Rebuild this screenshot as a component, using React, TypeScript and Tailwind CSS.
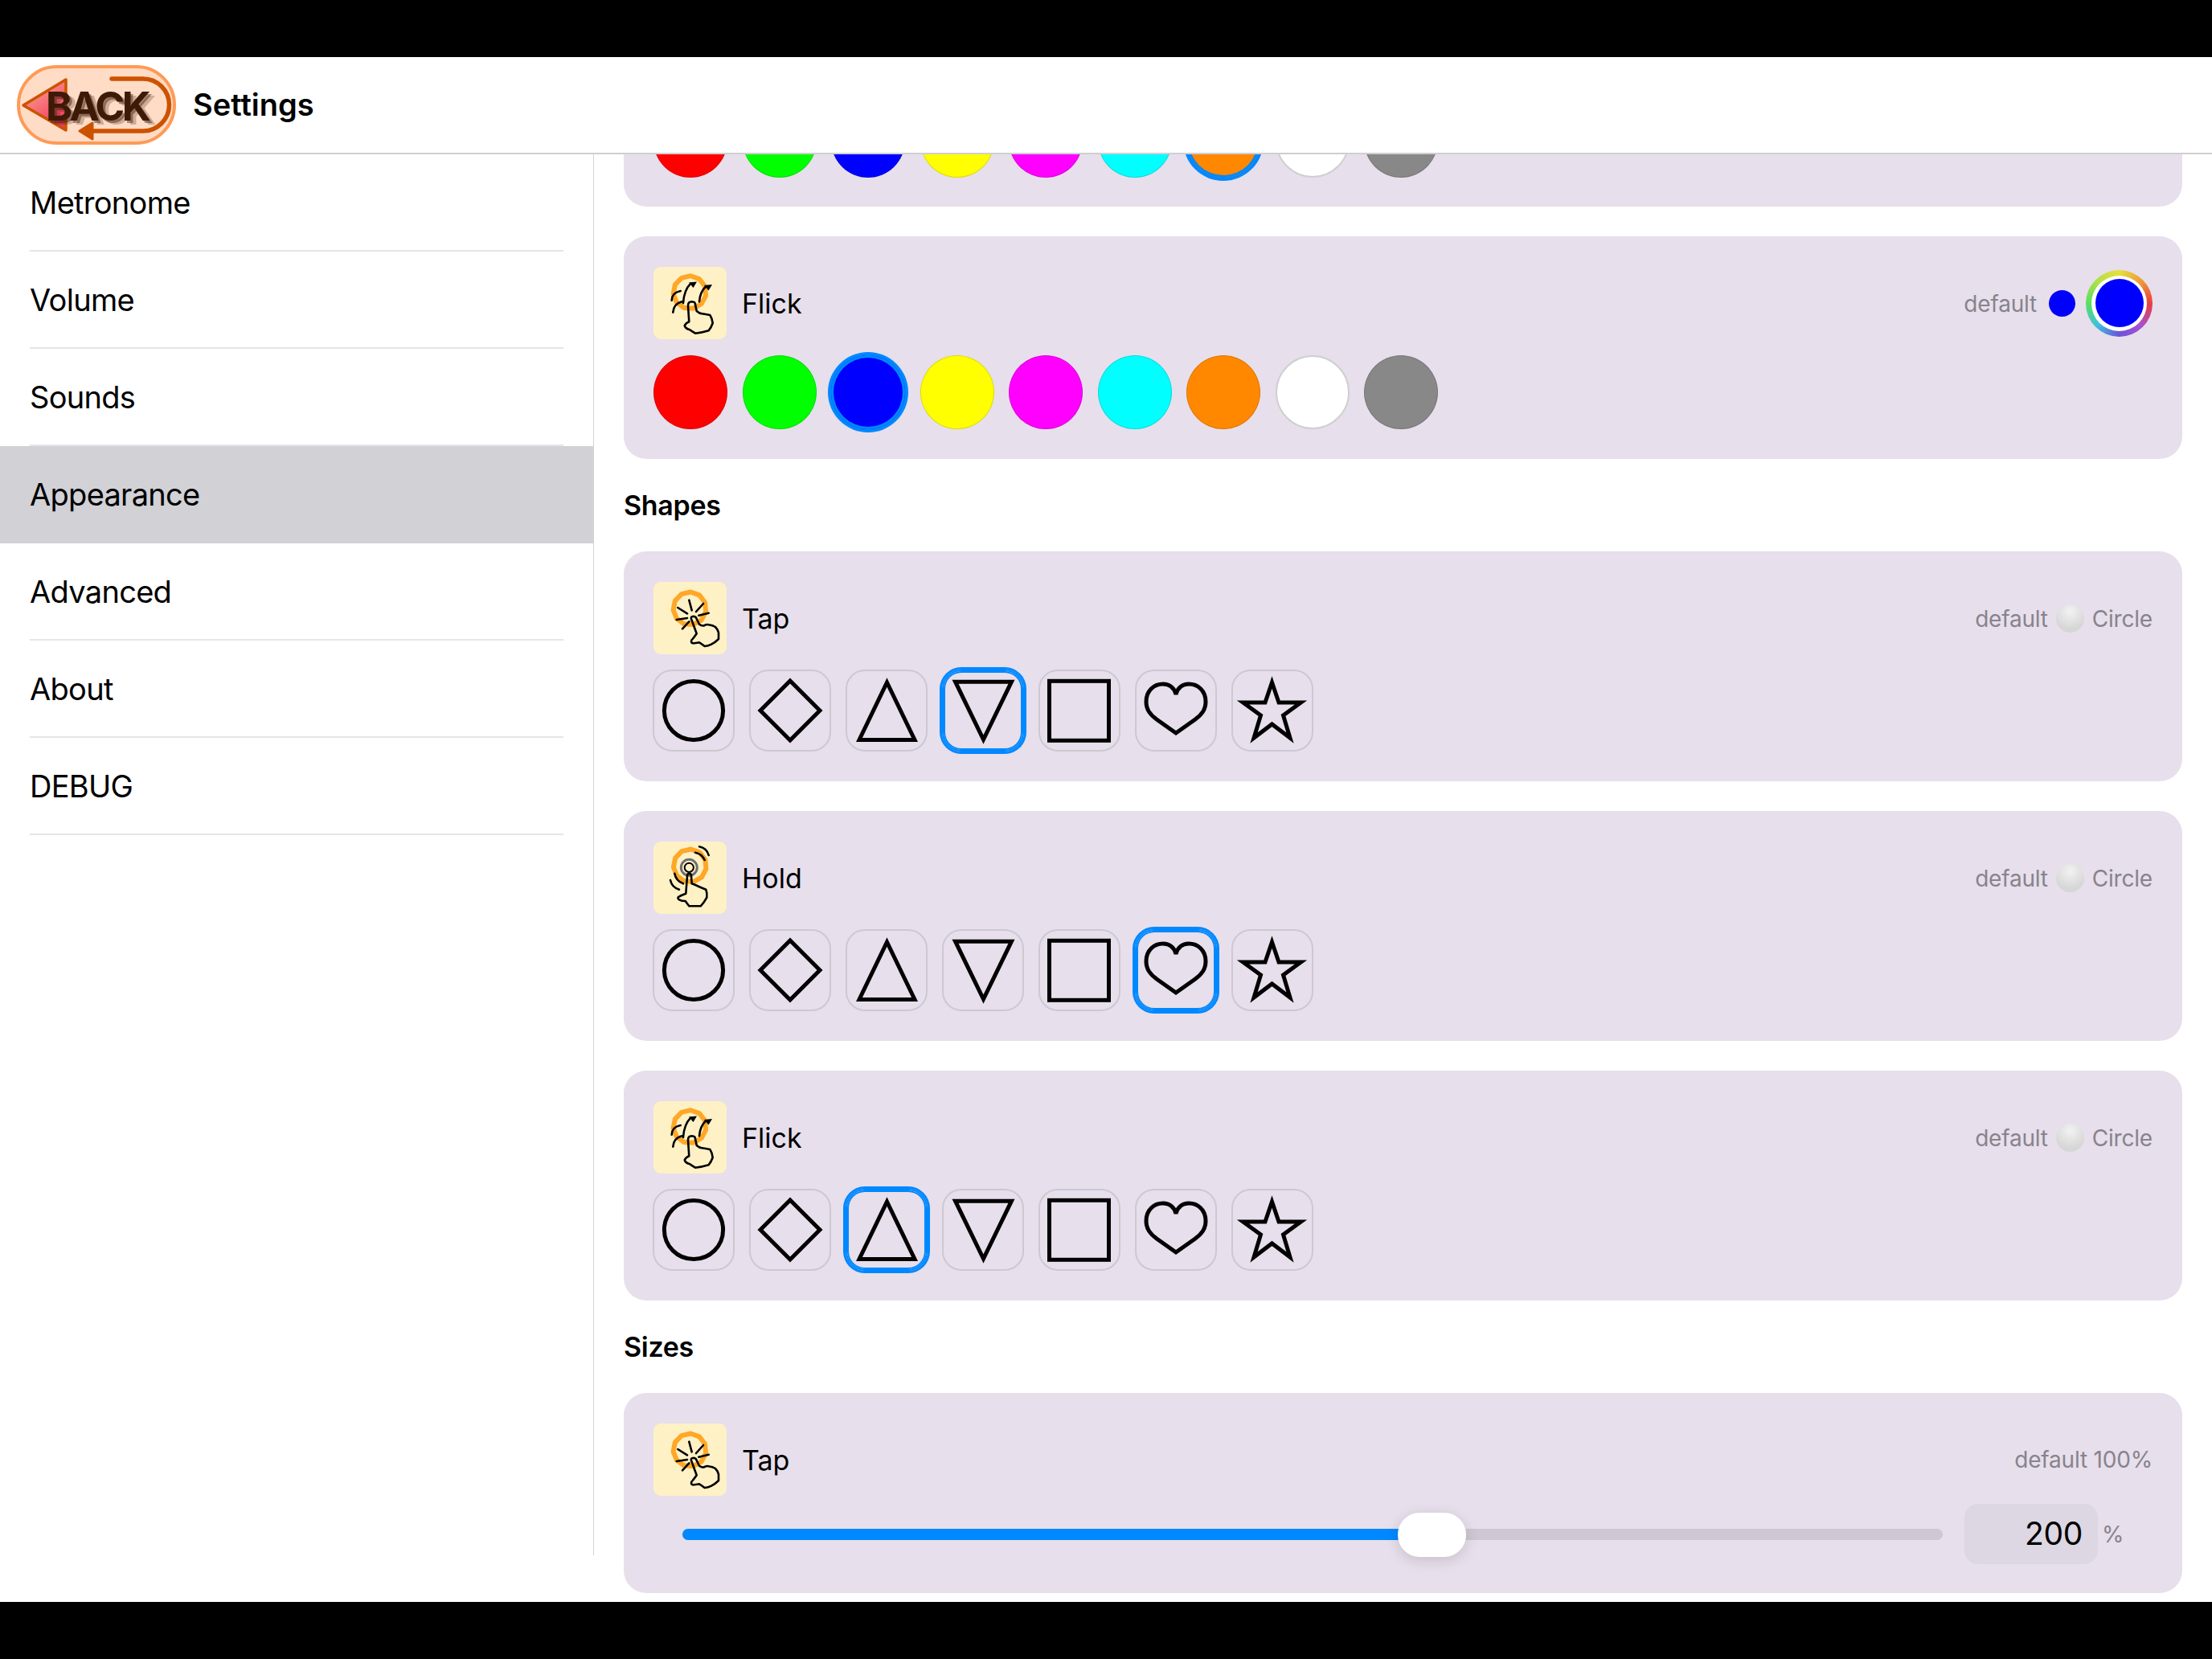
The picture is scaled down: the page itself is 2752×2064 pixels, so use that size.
import React from "react";

const FONT = "[font-family:Inter,'Liberation_Sans',sans-serif]";

function BackButton() {
  return (
    <div className="relative w-[198px] h-[99px] shrink-0 rounded-full bg-[#ffdcc6] border-[4px] border-[#ff9a55]">
      <svg className="absolute left-[-4px] top-[-4px]" width="198" height="99" viewBox="21 81 198 99" fill="none">
        <defs>
          <linearGradient id="tri" x1="0" y1="0" x2="0.6" y2="1">
            <stop offset="0" stopColor="#ffb39a" />
            <stop offset="1" stopColor="#ee3a5c" />
          </linearGradient>
        </defs>
        <path d="M29 131 L82 99 L82 162 Z" fill="url(#tri)" stroke="#cc5200" strokeWidth="3.5" strokeLinejoin="round" />
        <path d="M139 98 H178 A32.5 32.5 0 0 1 178 163 H112" stroke="#cc5200" strokeWidth="5.5" strokeLinecap="round" />
        <path d="M99 163 L115 153 L115 173 Z" fill="#cc5200" stroke="#cc5200" strokeWidth="3" strokeLinejoin="round" />
      </svg>
      <span className="absolute left-[32px] top-[17px] text-[50px] leading-[60px] font-bold tracking-[-3.5px] text-[#3d1a08] [text-shadow:3px_3px_0_rgba(61,26,8,0.45),7px_5px_0_rgba(61,26,8,0.25)]">
        BACK
      </span>
    </div>
  );
}

function Hand({ d }: { d: string }) {
  return <path d={d} fill="none" stroke="#000" strokeWidth="2.6" strokeLinejoin="round" strokeLinecap="round" />;
}

function Ring({ cx, cy }: { cx: number; cy: number }) {
  const pts = Array.from({ length: 11 }, (_, i) => {
    const a = (i / 11) * Math.PI * 2 + 0.2;
    return `${(cx + 20.5 * Math.cos(a)).toFixed(1)},${(cy + 20.5 * Math.sin(a)).toFixed(1)}`;
  }).join(" ");
  return <polygon points={pts} fill="none" stroke="#ffa726" strokeWidth="6" strokeLinejoin="round" />;
}

function GestureIcon({ kind }: { kind: "tap" | "hold" | "flick" }) {
  return (
    <div className="w-[91px] h-[90px] shrink-0 rounded-[9px] bg-[#fff1c6]">
      <svg width="91" height="90" viewBox="0 0 91 90" fill="none" stroke="#000" strokeWidth="2.6" strokeLinecap="round">
        {kind === "tap" && (
          <>
            <Ring cx={45} cy={33} />
            <path d="M44.3 22.7 L47.7 35.3 M62 27 L53 37 M30.3 32 L42 39.3 M68.7 38.7 L56.3 41.7 M28.7 47 L42 45 M44.3 49.3 L36 58.3" />
            <Hand d="M47 46 Q46 43 50 42.7 Q53 43 53.7 46 L57 52.7 Q60 55 63 54.3 Q66 52.5 68.7 53.3 Q74 54 77 56 Q80 59 81 63.3 L81 71 Q77 75 72 77.7 Q68 80 63.7 80 Q60 77 57 75.3 Q54 76 52 76 Q47 77 47 74.3 Q47 72 48.7 71 Q52 67 53.7 64.3 Z" />
          </>
        )}
        {kind === "hold" && (
          <>
            <Ring cx={45.3} cy={30} />
            <circle cx="44.3" cy="32.3" r="10" stroke="#6f6f6f" strokeWidth="3" />
            <circle cx="44.3" cy="32.3" r="5.6" strokeWidth="2" />
            <path d="M52 13.7 Q60 15 63.7 23 M57 6.3 Q66 8 68.7 17 M26.3 39.7 Q28 49 37 52.3 M21 48 Q23 57 32 59.7" />
            <Hand d="M42 43 Q42 39.7 44.5 39.7 Q47 39.7 47 43 L47.7 52.3 Q52 54 57 56.3 Q61 58 65.3 59.7 Q67 64 66.3 69.7 Q63 76 58.7 80.3 L44.3 80.3 Q41 76 39.7 74 Q35 74 32 72.3 Q29.5 70.5 31 69 Q35 66.5 40.3 64.7 Z" />
          </>
        )}
        {kind === "flick" && (
          <>
            <Ring cx={45} cy={31.7} />
            <path d="M37 45 Q38 29 46.3 20.7 M57 43.3 Q58 31 65.3 24.3 M22.7 41.7 Q23 32 33.7 30 M24.3 56.7 Q25 46 35.3 43.3" />
            <path d="M54 18.5 L44 19.5 L49.5 26 Z M73 22 L63 23 L68.5 29.5 Z" fill="#000" stroke="none" />
            <Hand d="M43 48.3 Q43 43.3 47.7 43.3 Q52 43.5 52 46.7 L53.7 55 Q57 58 60.3 58.3 Q65 59 70.3 60 Q73 64 73.7 70 Q72 75 68.7 79.3 Q60 82 52 82.7 Q48 80 45.3 78.3 Q40 77 38.7 73.3 Q40 70 44.3 68.3 Z" />
          </>
        )}
      </svg>
    </div>
  );
}

function Swatch({ color, selected, light }: { color: string; selected?: boolean; light?: boolean }) {
  return (
    <div
      className={
        "w-[92px] h-[92px] shrink-0 rounded-full " +
        (selected
          ? "shadow-[0_0_0_4px_#0088ff,inset_0_0_0_3px_#0088ff]"
          : light
            ? "border-[2px] border-[#cfcfd2]"
            : "border border-[#00000022]")
      }
      style={{ backgroundColor: color }}
    />
  );
}

const COLORS = ["#ff0000", "#00ff00", "#0000ff", "#ffff00", "#ff00ff", "#00ffff", "#ff8800", "#ffffff", "#888888"];

function SwatchRow({ selected }: { selected: number }) {
  return (
    <div className="flex gap-[18.5px]">
      {COLORS.map((c, i) => (
        <Swatch key={c} color={c} selected={i === selected} light={c === "#ffffff"} />
      ))}
    </div>
  );
}

const SHAPES = [
  <circle cx="39" cy="39" r="36.6" />,
  <path d="M39 2 L76 39 L39 76 L2 39 Z" />,
  <path d="M39.5 4 L74 75.5 L5 75.5 Z" />,
  <path d="M4.5 3.2 L74.5 3.2 L39.5 75 Z" />,
  <rect x="1.5" y="2.3" width="74" height="74" />,
  <path d="M39 67 L15 50 C7 44 2 38 2 28 C2 14 12 6 23 6 C31 6 37 11 39 19 C41 11 47 6 55 6 C66 6 76 14 76 28 C76 38 71 44 63 50 Z" />,
  <path d="M38.5 4 L47 29 L74.5 29 L52.5 45 L61 73 L38.5 56 L16 73 L24.5 45 L2.5 29 L30 29 Z" />,
];

function ShapeRow({ selected }: { selected: number }) {
  return (
    <div className="flex gap-[18px]">
      {SHAPES.map((s, i) => (
        <div
          key={i}
          className={
            "w-[102px] h-[102px] shrink-0 rounded-[24px] flex items-center justify-center " +
            (i === selected
              ? "border-[2px] border-[#0088ff] shadow-[0_0_0_3px_#0088ff,inset_0_0_0_2px_#0088ff]"
              : "border-[2px] border-[#cdc8d2]")
          }
        >
          <svg width="78" height="78" viewBox="0 0 78 78" fill="none" stroke="#000" strokeWidth="5" className="overflow-visible">
            {s}
          </svg>
        </div>
      ))}
    </div>
  );
}

function ShapeCard({ label, kind, selected }: { label: string; kind: "tap" | "hold" | "flick"; selected: number }) {
  return (
    <section className="h-[286px] rounded-[28px] bg-[#e7dfeb] pt-[38px] pl-[37px] pr-[37px]">
      <div className="flex items-center">
        <GestureIcon kind={kind} />
        <span className="ml-[19px] text-[34px] text-black">{label}</span>
        <div className="ml-auto flex items-center text-[28px] tracking-[-0.2px] text-[#87838d] pt-[2px]">
          <span>default</span>
          <span className="mx-[10px] -mt-[2px] w-[35px] h-[35px] rounded-full bg-[radial-gradient(circle_at_50%_25%,#f2f2f2,#d6d6d6_70%)]" />
          <span>Circle</span>
        </div>
      </div>
      <div className="mt-[19px] -ml-px">
        <ShapeRow selected={selected} />
      </div>
    </section>
  );
}

const MENU = ["Metronome", "Volume", "Sounds", "Appearance", "Advanced", "About", "DEBUG"];

export default function App() {
  return (
    <div className={"w-[2752px] h-[2064px] bg-black flex flex-col overflow-hidden " + FONT}>
      <div className="h-[71px] shrink-0" />
      <div className="h-[1922px] bg-white flex flex-col overflow-hidden">
        <header className="h-[121px] shrink-0 flex items-center pl-[21px] border-b-2 border-[#cfcfd2]">
          <BackButton />
          <h1 className="ml-[21px] text-[38px] font-semibold text-black">Settings</h1>
        </header>
        <div className="flex flex-1 min-h-0">
          <nav className="w-[739px] h-[1743px] shrink-0 border-r-[1.5px] border-[#d4d4d6]">
            {MENU.map((m) => (
              <div
                key={m}
                className={"h-[121px] text-[38px] text-black tracking-[-0.7px] " + (m === "Appearance" ? "bg-[#d1d1d6]" : "")}
              >
                <div className={"h-full ml-[37px] mr-[37px] flex items-center " + (m === "Appearance" ? "" : "pt-[2px] border-b-2 border-[#e5e5ea]")}>
                  {m}
                </div>
              </div>
            ))}
          </nav>
          <main className="flex-1 min-w-0 pl-[37px] pr-[37px] flex flex-col">
            <section className="h-[65px] shrink-0 rounded-b-[28px] bg-[#e7dfeb] pl-[37px] pb-[36px] flex items-end overflow-hidden">
              <SwatchRow selected={6} />
            </section>
            <section className="h-[277px] shrink-0 mt-[37px] rounded-[28px] bg-[#e7dfeb] pt-[38px] pl-[37px] pr-[37px]">
              <div className="flex items-center">
                <GestureIcon kind="flick" />
                <span className="ml-[19px] text-[34px] text-black">Flick</span>
                <div className="ml-auto flex items-center">
                  <span className="text-[28px] tracking-[-0.2px] text-[#87838d] pt-[2px]">default</span>
                  <span className="ml-[15px] w-[33px] h-[33px] rounded-full bg-[#0000ff]" />
                  <span className="ml-[13px] w-[83px] h-[83px] rounded-full flex items-center justify-center bg-[conic-gradient(from_0deg,#e6e03c,#ee9a38,#e83f3f,#a84fd0,#6a55d8,#3fc0e0,#58e060,#b0e048,#e6e03c)]">
                    <span className="w-[69px] h-[69px] rounded-full bg-white flex items-center justify-center">
                      <span className="w-[60px] h-[60px] rounded-full bg-[#0000ff]" />
                    </span>
                  </span>
                </div>
              </div>
              <div className="mt-[20px]">
                <SwatchRow selected={2} />
              </div>
            </section>

            <h2 className="h-[115px] shrink-0 flex items-center text-[34px] font-semibold text-black tracking-[-0.3px]">Shapes</h2>
            <div className="flex flex-col gap-[37px] shrink-0">
              <ShapeCard label="Tap" kind="tap" selected={3} />
              <ShapeCard label="Hold" kind="hold" selected={5} />
              <ShapeCard label="Flick" kind="flick" selected={2} />
            </div>

            <h2 className="h-[115px] shrink-0 flex items-center text-[34px] font-semibold text-black tracking-[-0.3px]">Sizes</h2>
            <section className="h-[249px] shrink-0 rounded-[28px] bg-[#e7dfeb] pt-[38px] pl-[37px] pr-[37px]">
              <div className="flex items-center">
                <GestureIcon kind="tap" />
                <span className="ml-[19px] text-[34px] text-black">Tap</span>
                <span className="ml-auto text-[28px] tracking-[-0.2px] text-[#87838d]">default 100%</span>
              </div>
              <div className="mt-[10px] flex items-center pl-[36px]">
                <div className="relative w-[1568px] h-[14px] rounded-full bg-[#cfc8d4]">
                  <div className="h-full w-[900px] rounded-l-full bg-[#0088ff]" />
                  <div className="absolute left-[890px] top-[-20px] w-[85px] h-[55px] rounded-[27px] bg-white shadow-[0_4px_18px_rgba(0,0,0,0.14)]" />
                </div>
                <div className="ml-[27px] w-[166px] h-[75px] rounded-[17px] bg-[#dcd7e2] flex items-center justify-end pr-[19px] text-[39px] tracking-[-0.3px] text-black">
                  200
                </div>
                <span className="ml-[5px] text-[28px] text-[#87838d]">%</span>
              </div>
            </section>
          </main>
        </div>
      </div>
      <div className="flex-1" />
    </div>
  );
}
